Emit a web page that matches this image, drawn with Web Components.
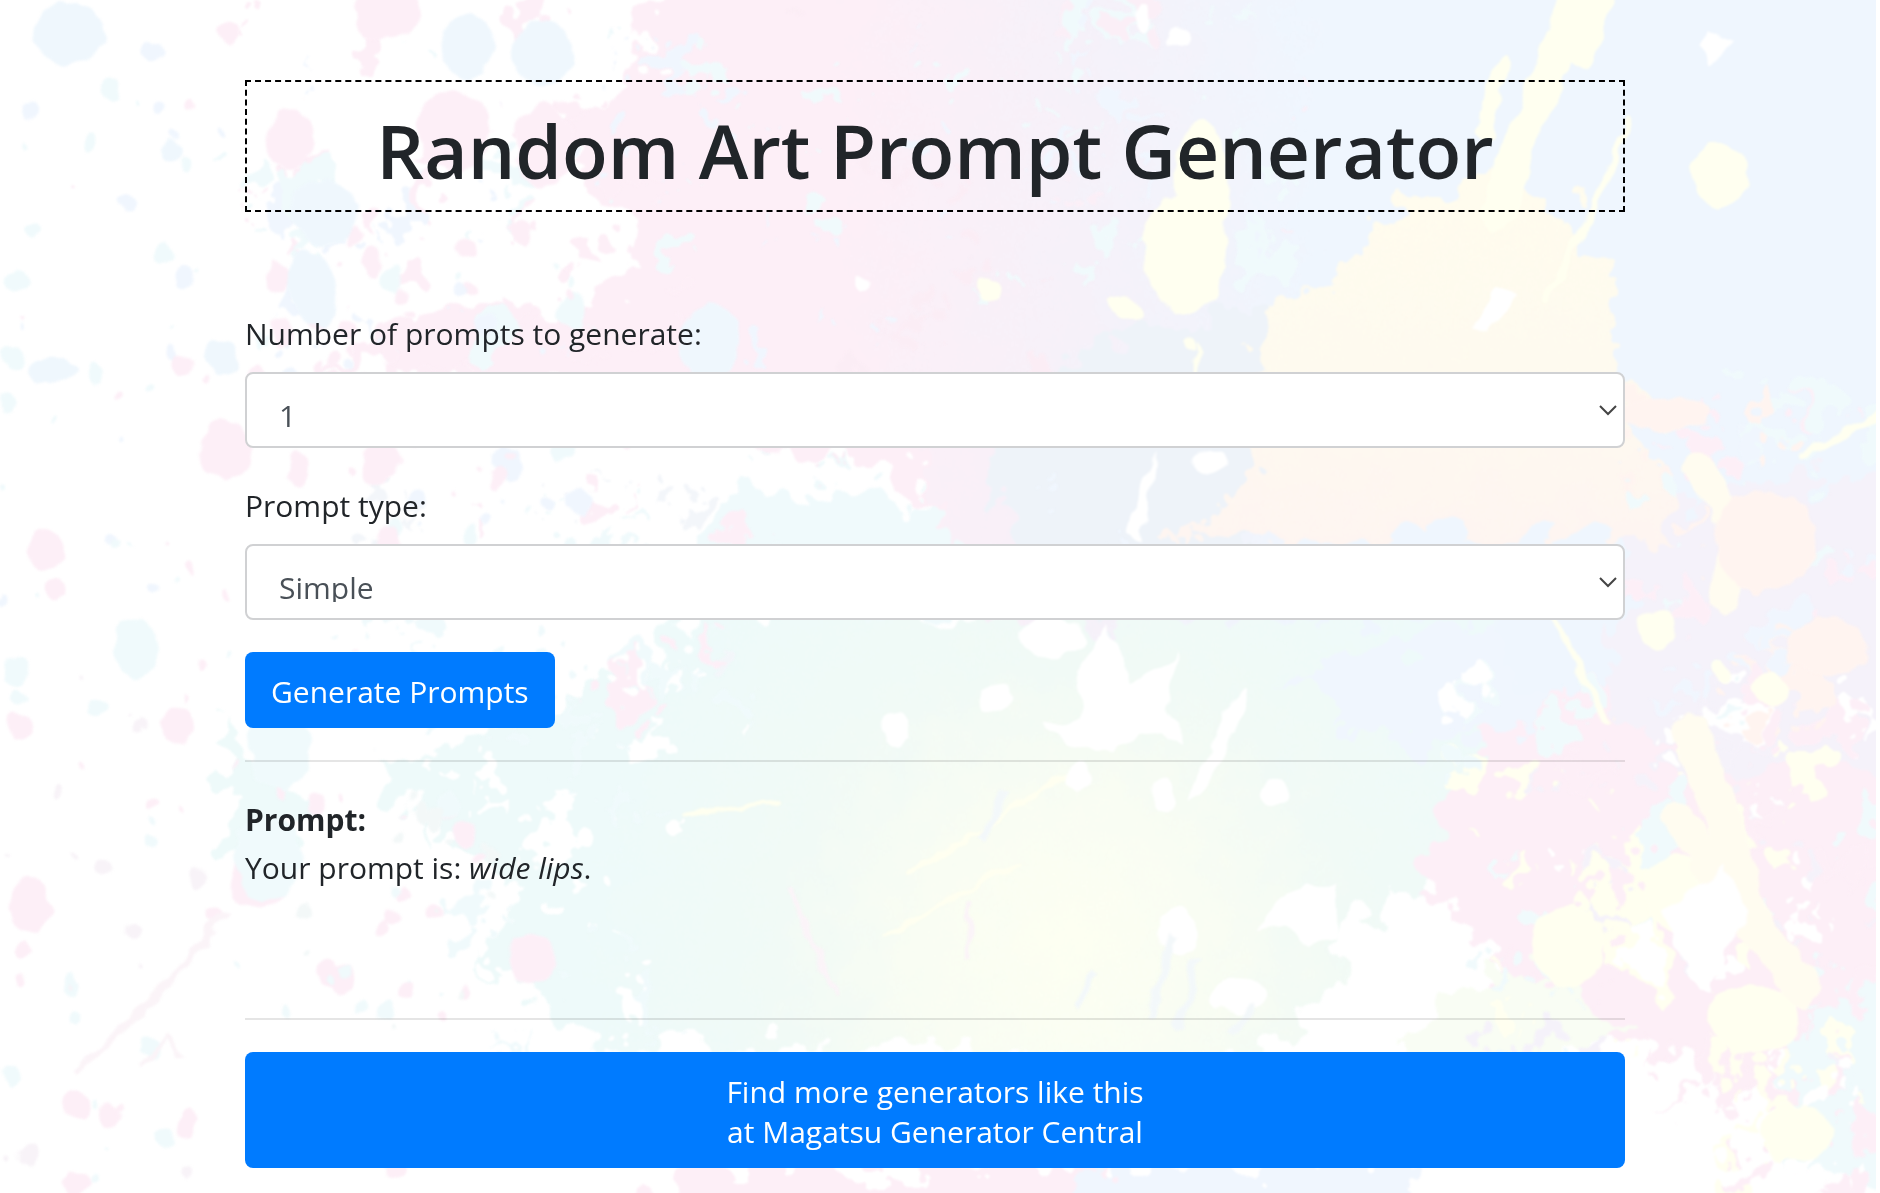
<!DOCTYPE html>
<html lang="en">
<head>
<meta charset="utf-8">
<meta name="viewport" content="width=device-width, initial-scale=1">
<title>Random Art Prompt Generator</title>
<style>
  body {
    margin: 0;
    background: #fff;
    color: #212529;
    font: 30px/48px "Open Sans", "Noto Sans", sans-serif;
  }
</style>
</head>
<body>
<paint-backdrop></paint-backdrop>
<prompt-page>
  <page-title slot="title">Random Art Prompt Generator</page-title>
  <select-field label="Number of prompts to generate:" options="1,2,3,4,5,10"></select-field>
  <select-field label="Prompt type:" options="Simple,Detailed,Complex"></select-field>
  <action-button>Generate Prompts</action-button>
  <prompt-result slot="result" heading="Prompt:">Your prompt is: <em>wide lips</em>.</prompt-result>
  <central-link slot="footer" href="#central">Find more generators like this<br>at Magatsu Generator Central</central-link>
</prompt-page>

<script>
class PaintBackdrop extends HTMLElement {
  constructor() {
    super()
    this.attachShadow({ mode: "open" })
    this._seed = 11
    this.shadowRoot.innerHTML = this.buildTemplate()
  }

  // small seeded generator, so the paint lands the same way on each load
  random() {
    this._seed = (this._seed * 16807) % 2147483647
    return this._seed / 2147483647
  }

  drops(count, x, y, width, height, maxRadius, colors) {
    let out = ""
    for (let i = 0; i < count; i++) {
      const cx = Math.round(x + this.random() * width)
      const cy = Math.round(y + this.random() * height)
      const size = this.random()
      const r = Math.round(2 + size * size * maxRadius)
      const color = colors[Math.floor(this.random() * colors.length)]
      out += `<ellipse cx="${cx}" cy="${cy}" rx="${r}" ry="${Math.round(r * (0.9 + this.random() * 0.5))}" fill="${color}"/>`
    }
    return out
  }

  blobs(color, list) {
    return `<g fill="${color}">${list
      .map(([cx, cy, rx, ry = rx, turn = 0]) =>
        `<ellipse cx="${cx}" cy="${cy}" rx="${rx}" ry="${ry}" transform="rotate(${turn} ${cx} ${cy})"/>`)
      .join("")}</g>`
  }

  buildTemplate() {
    const pink = "#fdeff7"
    const cyan = "#f0fafc"
    const blue = "#f0f6fe"
    const yellow = "#fffff0"
    const cream = "#fffcf0"
    const lilac = "#f5f2fa"
    const peach = "#fff4f0"

    return `<style>
    :host { position: fixed; inset: 0 4px 0 0; z-index: -1; overflow: hidden; }
    svg { display: block; width: 100%; height: 100%; }
    </style>
<svg viewBox="0 0 1568 995" preserveAspectRatio="xMidYMid slice" aria-hidden="true">
  <defs>
    <filter id="rough" x="-10%" y="-10%" width="120%" height="120%" color-interpolation-filters="sRGB">
      <feTurbulence type="fractalNoise" baseFrequency="0.035" numOctaves="3" seed="4"/>
      <feDisplacementMap in="SourceGraphic" scale="75" xChannelSelector="R" yChannelSelector="G"/>
      <feGaussianBlur stdDeviation="1"/>
    </filter>
    <filter id="drip" x="-10%" y="-10%" width="120%" height="120%" color-interpolation-filters="sRGB">
      <feTurbulence type="fractalNoise" baseFrequency="0.05" numOctaves="2" seed="9"/>
      <feDisplacementMap in="SourceGraphic" scale="14" xChannelSelector="R" yChannelSelector="G"/>
      <feGaussianBlur stdDeviation="1"/>
    </filter>
    <linearGradient id="sky" gradientUnits="userSpaceOnUse" x1="700" y1="0" x2="1100" y2="0">
      <stop offset="0" stop-color="#fdeff7"/>
      <stop offset="0.5" stop-color="#f6f1f9"/>
      <stop offset="1" stop-color="#eff6fe"/>
    </linearGradient>
    <linearGradient id="sun" x1="0" y1="0" x2="0" y2="1">
      <stop offset="0" stop-color="#fffcee"/>
      <stop offset="0.55" stop-color="#fefaef"/>
      <stop offset="1" stop-color="#fef5f1"/>
    </linearGradient>
    <radialGradient id="pool" gradientUnits="userSpaceOnUse" cx="890" cy="790" r="400">
      <stop offset="0" stop-color="#fdfff2"/>
      <stop offset="0.3" stop-color="#f9fdf3"/>
      <stop offset="0.6" stop-color="#f1faf6"/>
      <stop offset="1" stop-color="#eefafa"/>
    </radialGradient>
  </defs>

  <g filter="url(#rough)">
    <path fill="${pink}" d="M550-40H1000V520H830L770 400L640 370L560 330L400 315L260 305L330 270L400 250L470 270L530 220L500 150L430 110L540 70Z"/>
    <path fill="url(#sky)" d="M720-60H1640V660H1180L1000 560L830 520L770 380L700 240Z"/>
    <path fill="#eef3f9" d="M900 290L1060 250L1090 400L960 530L860 480L820 390Z"/>
    <path fill="${cyan}" d="M620 400L780 420L830 500L720 520L560 470Z"/>
    <path fill="url(#pool)" d="M330 640L440 590L560 560L580 500L800 520L1240 510L1270 620L1230 700L1130 780L1080 870L960 890L700 870L520 870L400 800L450 740L360 700Z"/>
    <path fill="url(#pool)" d="M190 600L240 640L250 700L220 740L190 690Z"/>
    <path fill="${pink}" d="M1260 600L1360 560L1600 540V990L1440 900L1330 870L1270 900L1230 780L1180 720Z"/>
    <path fill="${lilac}" d="M1360 420L1600 390V640L1430 650L1340 590Z"/>
    <path fill="${blue}" d="M1080 560L1240 520L1290 590L1240 620L1140 620Z"/>
    <path fill="url(#sun)" d="M1040 340L1060 250L1130 225L1160 170L1240 150L1300 165L1310 190L1345 220L1360 330L1400 450H980L1050 400Z"/>
    <path fill="${pink}" d="M560 970H960V1040H520Z"/>
    <path fill="${blue}" d="M920 970H1180V1040H900Z"/>
    <path fill="${yellow}" d="M1330 740L1360 690L1410 730L1390 820L1330 800Z"/>
    <path fill="#f9fdf4" d="M1200 830L1300 800L1360 860L1290 900H1160Z"/>
    <path fill="${cyan}" d="M1500 860L1590 800V1010L1490 960Z"/>
  </g>

  <g filter="url(#rough)">
    ${this.drops(75, 210, 20, 380, 330, 15, [pink, pink, cyan, blue])}
    ${this.drops(70, 280, 370, 360, 250, 15, [pink, cyan, "#f3f6fa", "#fff"])}
    ${this.drops(60, 560, 20, 380, 440, 11, [cyan, cyan, blue, "#fbedf5"])}
    ${this.drops(60, 350, 560, 220, 320, 16, ["#fff", "#fff", cyan])}
    ${this.drops(160, 1210, 580, 370, 330, 15, [yellow, cyan, pink, "#fff", lilac])}
    ${this.drops(60, 1350, 320, 220, 300, 18, [blue, peach, cyan, pink])}
    ${this.drops(60, 1380, 880, 190, 120, 15, [yellow, "#fff", pink])}
    ${this.drops(35, 880, 0, 230, 220, 16, [blue, cyan, "#fbeff7"])}
  </g>

  <g filter="url(#drip)">
    ${this.drops(45, 0, 30, 210, 490, 7, [cyan, cyan, blue, pink])}
    ${this.drops(45, 0, 530, 220, 460, 7, [pink, cyan, "#f8f3f8"])}
    ${this.drops(60, 230, 660, 190, 320, 9, [pink, cyan, "#f3f8f8"])}
    ${this.drops(70, 230, 180, 260, 300, 9, [pink, pink, cyan, blue])}
    ${this.blobs(pink, [[324, 10, 28, 22], [244, 116, 20, 25], [192, 28, 10], [38, 458, 16], [27, 755, 18, 22], [190, 375, 22, 24], [320, 386, 17, 19], [217, 315, 11], [380, 110, 30, 34], [455, 120, 24, 35], [50, 492, 8], [217, 733, 25, 23], [150, 605, 14, 16], [444, 800, 20], [65, 922, 11], [66, 988, 12]])}
    ${this.blobs("#eff7fd", [[60, 28, 30, 26], [392, 38, 22, 28], [455, 44, 24, 28], [145, 127, 9], [272, 176, 27, 28], [262, 240, 20, 32, -20], [594, 285, 24, 30], [185, 298, 14], [45, 309, 20, 10]])}
    ${this.blobs(cyan, [[115, 540, 18, 26, -15], [225, 715, 28, 35], [236, 625, 26, 35], [15, 560, 12]])}
    ${this.blobs(yellow, [[990, 210, 34, 52], [1004, 150, 22, 50], [1436, 146, 24, 26], [992, 285, 5], [826, 243, 10], [938, 257, 18, 8, 30], [1383, 525, 16], [1479, 575, 14], [1436, 560, 8], [1310, 790, 30, 34], [1397, 745, 24, 32], [1500, 945, 30, 24], [1465, 850, 38, 28]])}
    <g fill="none" stroke="${yellow}" stroke-linecap="round">
      <path stroke-width="28" d="M1318-10Q1300 60 1272 110L1250 180"/>
      <path stroke-width="14" d="M1254 55L1240 110"/>
      <path stroke-width="20" d="M1338-10L1322 45"/>
      <path stroke-width="6" d="M1360 100L1320 195L1290 250"/>
      <path stroke-width="6" d="M1505 380L1570 345M1340 600L1300 520L1285 470"/>
      <path stroke-width="4" d="M1000 285V330M570 680L650 670M760 730L900 640M740 780L850 720"/>
    </g>
    <g fill="none" stroke="${cream}" stroke-linecap="round">
      <path stroke-width="26" d="M1400 680L1440 740L1475 780"/>
      <path stroke-width="30" d="M1412 610L1440 690L1460 760L1505 825"/>
      <path stroke-width="26" d="M1420 390L1450 440L1440 500"/>
    </g>
    ${this.blobs(peach, [[1474, 450, 42, 42], [1525, 540, 34, 24], [1390, 345, 40, 14]])}
    <g fill="#fff">
      <path d="M900 560L925 520L945 570L985 545L975 590L990 620L950 610L930 630L895 622L870 605L905 600Z"/>
      <path d="M1050 775L1075 745L1115 735L1118 785L1095 788L1075 770Z"/>
      <path d="M1230 275L1250 240L1268 245L1245 280Z"/>
      <path d="M940 445L955 400L965 375L955 450Z"/>
      <path d="M1390 760L1440 720L1460 760L1430 820L1400 790Z"/>
      <path d="M1430 25L1445 35L1430 55L1420 38Z"/>
    </g>
    ${this.blobs("#fff", [[985, 775, 17, 19], [903, 648, 11, 13], [832, 582, 14, 11, -30], [880, 532, 26, 18], [748, 607, 12, 15], [970, 665, 11, 14], [1065, 662, 12, 10], [1012, 385, 16, 10], [1035, 830, 22, 14], [1028, 600, 6, 30, 30], [1010, 640, 5, 34, 30], [720, 237, 7], [984, 30, 12, 8], [955, 16, 6, 12]])}
    <g fill="none" stroke="#fbf4f8" stroke-width="6">
      <path d="M65 895Q110 850 160 800L190 760"/>
      <path stroke-width="4" d="M700 830L680 790L660 740M810 800V750M120 890L140 865L155 885"/>
    </g>
    <g fill="none" stroke="#f3f8fa" stroke-width="7">
      <path d="M960 850L980 780M985 860L1000 800M1030 860L1050 840M820 700L840 660M900 840L915 810"/>
    </g>
  </g>
</svg>`
  }
}

class PromptPage extends HTMLElement {
  constructor() {
    super()
    this.attachShadow({ mode: "open" })
    this.shadowRoot.innerHTML = `<style>
    :host { display: block; padding: 80px 10px 24px 0; }
    main { width: 100%; max-width: 1380px; margin: 0 auto; }
    form { display: flex; flex-direction: column; align-items: flex-start; gap: 32px; margin-top: 96px; }
    hr { margin: 32px 0; border: 0; border-top: 2px solid rgba(0, 0, 0, .1); }
    </style>
<main>
  <slot name="title"></slot>
  <form><slot></slot></form>
  <hr>
  <slot name="result"></slot>
  <hr>
  <slot name="footer"></slot>
</main>`
  }
}

class PageTitle extends HTMLElement {
  constructor() {
    super()
    this.attachShadow({ mode: "open" })
    this.shadowRoot.innerHTML = `<style>
    :host { display: block; border: 2px dashed #000; padding: 20px 16px 12px; text-align: center; }
    h1 { margin: 0; font-size: 75px; font-weight: 600; line-height: 96px; }
    </style>
<h1><slot></slot></h1>`
  }
}

class SelectField extends HTMLElement {
  constructor() {
    super()
    this.attachShadow({ mode: "open" })
    const options = this.getAttribute("options").split(",")
    this.shadowRoot.innerHTML = `<style>
    :host { display: block; width: 100%; }
    label { display: block; padding-top: 2px; margin-bottom: 14px; }
    .control { display: grid; align-items: center; }
    .control > * { grid-area: 1 / 1; }
    select {
      appearance: none;
      box-sizing: border-box;
      width: 100%;
      height: 76px;
      margin: 0;
      padding: 22px 32px 16px;
      border: 2px solid #d0d1d3;
      border-radius: 8px;
      background: #fff;
      color: #495057;
      font: inherit;
      line-height: 40px;
    }
    svg { justify-self: end; margin-right: 8px; pointer-events: none; }
    </style>
<label for="choice">${this.getAttribute("label")}</label>
<div class="control">
  <select id="choice">${options.map((option) => `<option>${option}</option>`).join("")}</select>
  <svg width="18" height="12" viewBox="0 0 18 12" fill="none" stroke="#444" stroke-width="2" aria-hidden="true">
    <path d="M1 2L9 10L17 2"/>
  </svg>
</div>`
  }
}

class ActionButton extends HTMLElement {
  constructor() {
    super()
    this.attachShadow({ mode: "open" })
    this.shadowRoot.innerHTML = `<style>
    :host { display: block; }
    button {
      display: block;
      margin: 0;
      padding: 20px 26px 16px;
      border: 0;
      border-radius: 8px;
      background: #007bff;
      color: #fff;
      font: inherit;
      line-height: 40px;
      cursor: pointer;
    }
    </style>
<button type="button"><slot></slot></button>`
  }
}

class PromptResult extends HTMLElement {
  constructor() {
    super()
    this.attachShadow({ mode: "open" })
    this.shadowRoot.innerHTML = `<style>
    :host { display: block; box-sizing: border-box; min-height: 192px; padding-top: 2px; }
    p { margin: 0; }
    </style>
<p><strong>${this.getAttribute("heading")}</strong></p>
<p><slot></slot></p>`
  }
}

class CentralLink extends HTMLElement {
  constructor() {
    super()
    this.attachShadow({ mode: "open" })
    this.shadowRoot.innerHTML = `<style>
    :host { display: block; }
    a {
      display: block;
      padding: 20px 26px 16px;
      border-radius: 8px;
      background: #007bff;
      color: #fff;
      line-height: 40px;
      text-align: center;
      text-decoration: none;
    }
    </style>
<a href="${this.getAttribute("href")}"><slot></slot></a>`
  }
}

customElements.define("paint-backdrop", PaintBackdrop)
customElements.define("prompt-page", PromptPage)
customElements.define("page-title", PageTitle)
customElements.define("select-field", SelectField)
customElements.define("action-button", ActionButton)
customElements.define("prompt-result", PromptResult)
customElements.define("central-link", CentralLink)
</script>
</body>
</html>
